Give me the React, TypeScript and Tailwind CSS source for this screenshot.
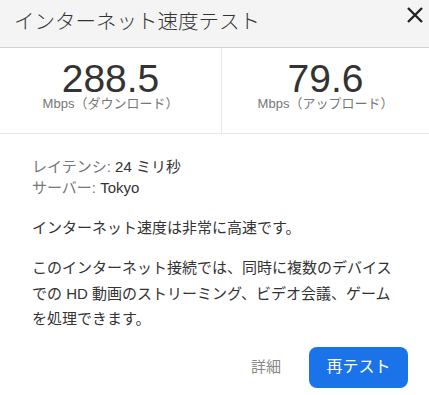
const font = "font-['Liberation_Sans','Noto_Sans_CJK_JP',sans-serif]";

export default function App() {
  return (
    <div className={`w-[429px] h-[395px] bg-white text-[#333] ${font} overflow-hidden`}>
      {/* Header */}
      <div className="h-[48px] bg-[#f4f4f4] border-b border-[#d2d2d2] flex items-center justify-between pl-[14px] pr-[2px]">
        <span className="text-[20.5px] text-[#333] leading-none font-['Noto_Sans_CJK_JP',sans-serif] font-light pb-[7px]">
          インターネット速度テスト
        </span>
        <button className="w-[24px] h-[24px] flex items-center justify-center self-start mt-[3px]">
          <svg width="18" height="18" viewBox="0 0 18 18" fill="none" stroke="#222" strokeWidth={2.4}>
            <path d="M2 2 L16 16 M16 2 L2 16" />
          </svg>
        </button>
      </div>

      {/* Results */}
      <div className="grid grid-cols-[222px_1fr] border-b border-[#e8e8e8] h-[86px]">
        <div className="flex flex-col items-center pt-[14px] border-r border-[#e8e8e8]">
          <span className="text-[39px] leading-[34px] text-[#333]">288.5</span>
          <span className="text-[13px] leading-[15px] text-[#777]">Mbps（ダウンロード）</span>
        </div>
        <div className="flex flex-col items-center pt-[14px]">
          <span className="text-[39px] leading-[34px] text-[#333]">79.6</span>
          <span className="text-[13px] leading-[15px] text-[#777]">Mbps（アップロード）</span>
        </div>
      </div>

      {/* Details */}
      <div className="px-[32px] pt-[22px] text-[15px] leading-[21px]">
        <div>
          <span className="text-[#777]">レイテンシ: </span>
          <span className="text-[#333]">24 ミリ秒</span>
        </div>
        <div>
          <span className="text-[#777]">サーバー: </span>
          <span className="text-[#333]">Tokyo</span>
        </div>
        <p className="mt-[19px] text-[#333]">インターネット速度は非常に高速です。</p>
        <p className="mt-[17px] text-[#333] leading-[25.5px]">
          このインターネット接続では、同時に複数のデバイスでの HD 動画のストリーミング、ビデオ会議、ゲームを処理できます。
        </p>
      </div>

      {/* Actions */}
      <div className="flex items-center justify-end gap-[28px] pr-[21px] mt-[15px]">
        <button className="text-[15px] text-[#888]">詳細</button>
        <button className="w-[99px] h-[41px] rounded-[8px] bg-[#1a73e8] text-white text-[16px]">再テスト</button>
      </div>
    </div>
  );
}
